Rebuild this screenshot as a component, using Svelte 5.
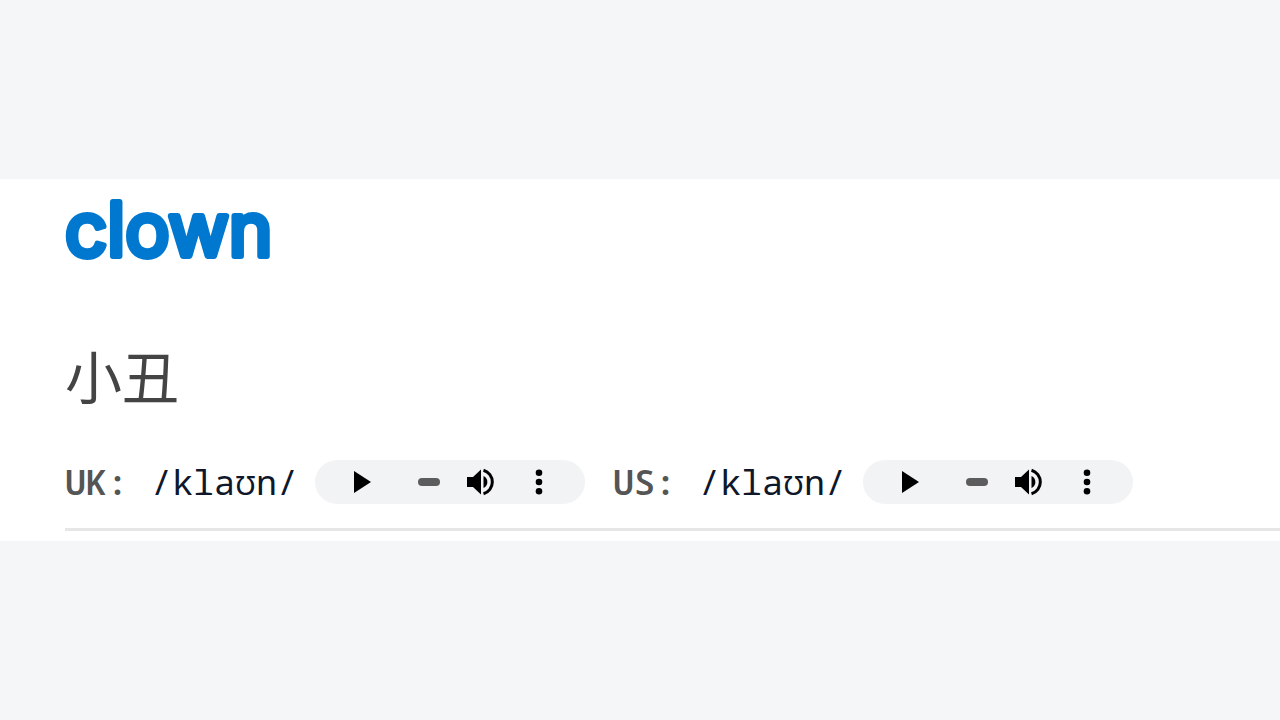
<script>
  const word = { text: 'clown', meaning: '小丑' };

  const pronunciations = [
    { region: 'UK', ipa: '/klaʊn/' },
    { region: 'US', ipa: '/klaʊn/' }
  ];
</script>

<main class="page">
  <article class="word-card">
    <h1 class="word">
      <svg class="word-text" height="96">
        <text x="0" y="60">{word.text}</text>
      </svg>
    </h1>
    <p class="meaning" lang="zh-CN">{word.meaning}</p>

    <div class="pronunciations">
      {#each pronunciations as item}
        <div class="pronunciation">
          <span class="region">{item.region}:</span>
          <span class="ipa">{item.ipa}</span>
          <div class="player" role="group" aria-label="{item.region} audio">
            <button class="play" type="button" aria-label="Play">
              <svg viewBox="0 0 36 36"><path d="M10 7v22l17-11z" /></svg>
            </button>
            <input class="seek" type="range" min="0" max="1" value="0" aria-label="Seek" />
            <button type="button" aria-label="Mute">
              <svg viewBox="0 0 36 36">
                <path d="M5 13v10h6l8 7.5v-25l-8 7.5z" />
                <path d="M21.5 12a6.6 6.6 0 0 1 0 12z" />
                <path class="wave" d="M21.5 6.2a12.3 12.3 0 0 1 0 23.6" />
              </svg>
            </button>
            <button type="button" aria-label="More options">
              <svg viewBox="0 0 36 36">
                <circle cx="19" cy="8.8" r="3.3" />
                <circle cx="19" cy="18" r="3.3" />
                <circle cx="19" cy="27.2" r="3.3" />
              </svg>
            </button>
          </div>
        </div>
      {/each}
    </div>
  </article>
</main>

<style>
  :global(body) {
    background: #f5f6f8;
  }

  .page {
    min-height: 100vh;
    display: flex;
    flex-direction: column;
    justify-content: center;
  }

  .word-card {
    background: #fff;
    padding: 17px 0 10px 65px;
  }

  .word {
    margin: 0;
    height: 96px;
  }

  .word-text {
    display: block;
    width: 100%;
    overflow: visible;
    font-family: Inter, sans-serif;
    font-size: 74px;
    font-weight: 400;
    fill: #0078d0;
    stroke: #0078d0;
    stroke-width: 6px;
    stroke-linejoin: round;
  }

  .meaning {
    margin: 40px 0 44px;
    color: #444;
    font-family: 'Noto Sans CJK SC', sans-serif;
    font-size: 57px;
    line-height: 84px;
  }

  .pronunciations {
    display: flex;
    gap: 28px;
    padding-bottom: 24px;
    border-bottom: 3px solid #e6e6e6;
    font-family: 'Noto Sans Mono', 'Liberation Mono', monospace;
    font-size: 35px;
    line-height: 44px;
    white-space: nowrap;
  }

  .pronunciation {
    display: flex;
    align-items: center;
  }

  .region {
    margin-right: 23px;
    color: #555;
    font-weight: 600;
  }

  .ipa {
    margin-right: 17px;
    color: #0f172a;
  }

  .player {
    box-sizing: border-box;
    display: flex;
    align-items: center;
    gap: 22px;
    width: 270px;
    height: 44px;
    padding: 0 28px 0 29px;
    border-radius: 22px;
    background: #f1f3f4;
  }

  button {
    flex: none;
    width: 36px;
    height: 36px;
    padding: 0;
    border: 0;
    background: none;
    cursor: pointer;
  }

  button svg {
    display: block;
    width: 36px;
    height: 36px;
    fill: #000;
  }

  .play {
    margin-right: 16px;
  }

  .wave {
    fill: none;
    stroke: #000;
    stroke-width: 3;
  }

  .seek {
    appearance: none;
    width: 22px;
    height: 8px;
    margin: 0;
    border-radius: 4px;
    background: #5c5c5c;
  }

  .seek::-webkit-slider-thumb {
    appearance: none;
    width: 0;
    height: 0;
  }
</style>
